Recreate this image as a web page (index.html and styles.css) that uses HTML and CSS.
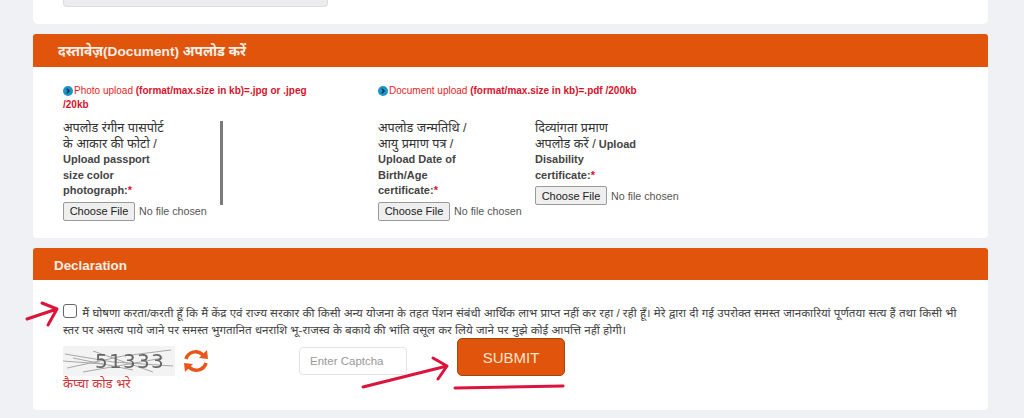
FILE: index.html
```html
<!DOCTYPE html>
<html lang="hi">
<head>
<meta charset="utf-8">
<title>Document upload</title>
<link rel="stylesheet" href="styles.css">
</head>
<body>
<div class="page">
  <section class="card top-card"><div class="old-input"></div></section>

  <section class="card doc-card">
    <h2 class="head head-doc">दस्तावेज़(Document) अपलोड करें</h2>
    <div class="doc-body">
      <div class="col col-photo">
        <p class="hint hint-photo"><span class="dot"><svg viewBox="0 0 10 10" width="10" height="10"><circle cx="5" cy="5" r="5" fill="#1b95c9"/><path d="M3.8 2.8 6 5 3.8 7.2" fill="none" stroke="#12324a" stroke-width="1.5"/></svg></span>Photo upload <b>(format/max.size in kb)=.jpg or .jpeg /20kb</b></p>
        <div class="scroll-wrap">
          <div class="field field-photo">
            <div class="label"><span class="hi">अपलोड रंगीन पासपोर्ट के आकार की फोटो /</span> Upload passport size color photograph:<i>*</i></div>
            <div class="file"><button class="choose">Choose File</button><span>No file chosen</span></div>
          </div>
          <div class="scrollbar"></div>
        </div>
      </div>
      <div class="col col-doc">
        <p class="hint"><span class="dot"><svg viewBox="0 0 10 10" width="10" height="10"><circle cx="5" cy="5" r="5" fill="#1b95c9"/><path d="M3.8 2.8 6 5 3.8 7.2" fill="none" stroke="#12324a" stroke-width="1.5"/></svg></span>Document upload <b>(format/max.size in kb)=.pdf /200kb</b></p>
        <div class="doc-fields">
          <div class="field field-birth">
            <div class="label"><span class="hi">अपलोड जन्मतिथि / आयु प्रमाण पत्र /</span> Upload Date of Birth/Age certificate:<i>*</i></div>
            <div class="file"><button class="choose">Choose File</button><span>No file chosen</span></div>
          </div>
          <div class="field field-dis">
            <div class="label"><span class="hi">दिव्यांगता प्रमाण अपलोड करें /</span> Upload Disability certificate:<i>*</i></div>
            <div class="file"><button class="choose">Choose File</button><span>No file chosen</span></div>
          </div>
        </div>
      </div>
    </div>
  </section>

  <section class="card decl-card">
    <h2 class="head head-decl">Declaration</h2>
    <div class="decl-body">
      <p class="decl-text"><span class="check"></span> मैं घोषणा करता/करती हूँ कि मैं केंद्र एवं राज्य सरकार की किसी अन्य योजना के तहत पेंशन संबंधी आर्थिक लाभ प्राप्त नहीं कर रहा / रही हूँ। मेरे द्वारा दी गई उपरोक्त समस्त जानकारियां पूर्णतया सत्य हैं तथा किसी भी स्तर पर असत्य पाये जाने पर समस्त भुगतानित धनराशि भू-राजस्व के बकाये की भांति वसूल कर लिये जाने पर मुझे कोई आपत्ति नहीं होगी।</p>
      <div class="captcha-row">
        <div class="captcha-col">
          <div class="captcha-line">
            <svg class="captcha" viewBox="0 0 112 30" width="112" height="30">
              <rect width="112" height="30" fill="#f3f3f3"/>
              <path d="M2 8 50 16 110 20M4 22 60 10 108 4M10 12 70 24M20 26 100 12M0 15 40 18M30 5 90 26" fill="none" stroke="#a8a8a8" stroke-width="1"/>
              <text x="32" y="22" class="captcha-text">51333</text>
            </svg>
            <svg class="refresh" viewBox="0 0 26 28" width="26" height="28">
              <path d="M3 12C5 5 14 2 20 8" fill="none" stroke="#e8561a" stroke-width="3.6"/>
              <path d="M16 11 25 12 24 3Z" fill="#e8561a"/>
              <path d="M23 16C21 23 12 26 6 20" fill="none" stroke="#e8561a" stroke-width="3.6"/>
              <path d="M10 17 1 16 2 25Z" fill="#e8561a"/>
            </svg>
          </div>
          <div class="captcha-note">कैप्चा कोड भरे</div>
        </div>
        <input class="captcha-input" placeholder="Enter Captcha">
        <button class="submit">SUBMIT</button>
      </div>
    </div>
  </section>
</div>
<svg class="ink ink-layer" viewBox="0 0 1024 418" width="1024" height="418">
  <path d="M27 319 57 309M42 303 57 309 48 325" />
  <path d="M363 387 447 366M433 358 447 366 438 379" />
  <path d="M455 388 563 386" />
</svg>
</body>
</html>
```

FILE: styles.css
```css
* { box-sizing: border-box; }
html, body { margin: 0; padding: 0; }
body {
  position: relative;
  width: 1024px;
  height: 418px;
  overflow: hidden;
  background: #f0f1f4;
  font-family: "Liberation Sans", "Noto Sans", "DejaVu Sans", sans-serif;
  color: #333;
}
.page {
  display: flex;
  flex-direction: column;
  gap: 10px;
  padding: 0 36px 0 33px;
}
.card { background: #fff; border-radius: 4px; }
.top-card { height: 24px; padding-left: 30px; border-radius: 0 0 5px 5px; }
.old-input {
  width: 265px;
  height: 7px;
  background: #ececee;
  border: 1px solid #dcdcdc;
  border-top: 0;
  border-radius: 0 0 4px 4px;
}
.doc-card { height: 204px; }
.decl-card { height: 162px; }
.head {
  margin: 0;
  background: #e1540b;
  color: #f6efe6;
  font-weight: 700;
  border-radius: 3px 3px 0 0;
  padding-left: 25px;
}
.head-doc { height: 33px; font-size: 13.7px; line-height: 35px; }
.head-decl { height: 32px; font-size: 13.4px; line-height: 35px; padding-left: 21px; }

.doc-body { display: flex; padding: 17px 0 0 30px; }
.col-photo { width: 315px; }
.col-doc { width: 400px; }
.hint {
  margin: 0;
  color: #ee1c25;
  font-size: 10px;
  line-height: 14px;
  width: 252px;
}
.col-doc .hint { width: 300px; }
.hint b { font-weight: 700; color: #d9122b; }
.dot { display: inline-block; width: 11px; height: 10px; vertical-align: -2px; }
.scroll-wrap { display: flex; margin-top: 9px; }
.field-photo { width: 157px; }
.scrollbar { width: 3px; height: 84px; margin: 0; background: #7a7a7a; }
.doc-fields { display: flex; margin-top: 23px; }
.field-birth { width: 157px; }
.field-dis { width: 160px; }
.label {
  font-size: 11px;
  line-height: 15.5px;
  font-weight: 700;
  color: #444;
}
.hi { font-size: 12.6px; font-weight: 400; color: #333; }
.field-photo .label { width: 106px; }
.field-birth .label { width: 100px; }
.field-dis .label { width: 104px; }
.label i { color: #d9122b; font-style: normal; }
.file { display: flex; align-items: center; margin-top: 3px; white-space: nowrap; font-size: 10.7px; color: #555; }
.choose {
  width: 72px;
  height: 19px;
  padding: 0;
  margin-right: 4px;
  background: #efefef;
  border: 1px solid #9a9a9a;
  border-radius: 2px;
  font: 11px "Liberation Sans", sans-serif;
  color: #222;
}

.decl-body { padding: 24px 30px 0 30px; position: relative; }
.decl-text {
  margin: 0;
  font-size: 11.62px;
  line-height: 17px;
  color: #444;
  width: 897px;
}
.check {
  display: inline-block;
  width: 14px;
  height: 14px;
  margin-right: 2px;
  vertical-align: -1px;
  background: #fff;
  border: 1.5px solid #666;
  border-radius: 3px;
}
.captcha-row { display: flex; align-items: flex-start; margin-top: 8px; }
.captcha-col { width: 236px; }
.captcha-line { display: flex; align-items: center; gap: 8px; }
.captcha { display: block; filter: blur(.6px); }
.captcha-text { font: 20px "DejaVu Sans", sans-serif; fill: #666; letter-spacing: 1.3px; }
.captcha-note { margin-top: 0; font-size: 13px; line-height: 16px; color: #d2333a; }
.captcha-input {
  width: 108px;
  height: 28px;
  margin-top: 1px;
  padding: 0 10px;
  border: 1px solid #e4e4e4;
  border-radius: 4px;
  background: #fff;
  font: 11.5px "Liberation Sans", sans-serif;
}
.captcha-input::placeholder { color: #999; }
.submit {
  width: 108px;
  height: 38px;
  margin: -8px 0 0 50px;
  background: #e1540b;
  border: 1px solid #9c4a12;
  border-radius: 5px;
  color: #fbe6cc;
  font: 15px "Liberation Sans", sans-serif;
}
.ink-layer { position: absolute; left: 0; top: 0; pointer-events: none; }
.ink path { fill: none; stroke: #dc143c; stroke-width: 3; stroke-linecap: round; stroke-linejoin: round; }
```
